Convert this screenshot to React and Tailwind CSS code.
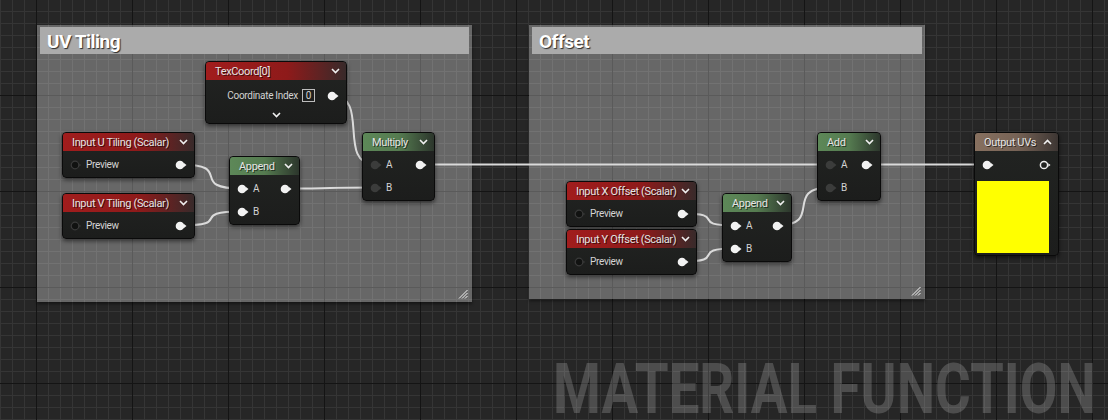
import React from 'react';

const W = 1108;
const H = 420;

const HEADERS = {
  red: 'bg-[linear-gradient(90deg,#a11d1d_0%,#8e1a1a_58%,#382a2a_100%)]',
  green: 'bg-[linear-gradient(90deg,#5d8858_0%,#557b50_50%,#2c362c_100%)]',
  brown: 'bg-[linear-gradient(90deg,#87705f_0%,#776356_50%,#3d3633_100%)]',
};

const PT = { 2: 'pt-[2px]', 4: 'pt-[4px]' };

const NODES = [
  { id: 'tex', x: 205, y: 61, w: 142, pt: 4, kind: 'red', title: 'TexCoord[0]', tex: true },
  { id: 'inU', x: 62, y: 132, w: 133, pt: 2, kind: 'red', title: 'Input U Tiling (Scalar)', rows: [{ l: 'hollow', label: 'Preview', r: 'filled' }] },
  { id: 'inV', x: 62, y: 193, w: 133, pt: 2, kind: 'red', title: 'Input V Tiling (Scalar)', rows: [{ l: 'hollow', label: 'Preview', r: 'filled' }] },
  { id: 'appUV', x: 229, y: 156, w: 71, pt: 2, kind: 'green', title: 'Append', rows: [{ l: 'filled', label: 'A', r: 'filled' }, { l: 'filled', label: 'B' }] },
  { id: 'mul', x: 362, y: 132, w: 73, pt: 2, kind: 'green', title: 'Multiply', rows: [{ l: 'dark', label: 'A', r: 'filled' }, { l: 'dark', label: 'B' }] },
  { id: 'inX', x: 566, y: 181, w: 131, pt: 2, kind: 'red', title: 'Input X Offset (Scalar)', rows: [{ l: 'hollow', label: 'Preview', r: 'filled' }] },
  { id: 'inY', x: 566, y: 229, w: 131, pt: 2, kind: 'red', title: 'Input Y Offset (Scalar)', rows: [{ l: 'hollow', label: 'Preview', r: 'filled' }] },
  { id: 'appOff', x: 722, y: 193, w: 70, pt: 2, kind: 'green', title: 'Append', rows: [{ l: 'filled', label: 'A', r: 'filled' }, { l: 'filled', label: 'B' }] },
  { id: 'add', x: 817, y: 132, w: 64, pt: 2, kind: 'green', title: 'Add', rows: [{ l: 'dark', label: 'A', r: 'filled' }, { l: 'dark', label: 'B' }] },
  { id: 'out', x: 974, y: 132, w: 85, pt: 2, kind: 'brown', title: 'Output UVs', up: true, output: true },
];

const byId = Object.fromEntries(NODES.map((n) => [n.id, n]));
const rowY = (n, i) => n.y + 19 + n.pt + 11.5 + 23 * i;
const inX = (n) => n.x + 13;
const outX = (n) => n.x + n.w - 15;

const LINKS = [
  ['tex', 0, 'mul', 0],
  ['inU', 0, 'appUV', 0],
  ['inV', 0, 'appUV', 1],
  ['appUV', 0, 'mul', 1],
  ['mul', 0, 'add', 0],
  ['inX', 0, 'appOff', 0],
  ['inY', 0, 'appOff', 1],
  ['appOff', 0, 'add', 1],
  ['add', 0, 'out', 0],
];

function wirePath([a, ai, b, bi]) {
  const na = byId[a];
  const nb = byId[b];
  const x1 = outX(na);
  const y1 = rowY(na, ai);
  const x2 = inX(nb);
  const y2 = rowY(nb, bi);
  const k = Math.min(60, Math.max(20, (x2 - x1) * 0.9));
  return `M${x1} ${y1} C${x1 + k} ${y1}, ${x2 - k} ${y2}, ${x2} ${y2}`;
}

function Pin({ type }) {
  if (type === 'filled')
    return (
      <svg width="12" height="10" viewBox="0 0 12 10" className="shrink-0">
        <circle cx="5" cy="5" r="4.3" fill="#f2f2f2" />
        <path d="M9 3 L11.5 5 L9 7 Z" fill="#f2f2f2" />
      </svg>
    );
  if (type === 'dark')
    return (
      <svg width="12" height="10" viewBox="0 0 12 10" className="shrink-0">
        <circle cx="5" cy="5" r="4.3" fill="#3b3c3b" />
        <path d="M9 3 L11.5 5 L9 7 Z" fill="#3b3c3b" />
      </svg>
    );
  if (type === 'ring')
    return (
      <svg width="12" height="10" viewBox="0 0 12 10" className="shrink-0">
        <circle cx="5" cy="5" r="3.6" fill="none" stroke="#eeeeee" strokeWidth="1.5" />
        <path d="M9.3 3.3 L11.5 5 L9.3 6.7 Z" fill="#eeeeee" />
      </svg>
    );
  return (
    <svg width="12" height="10" viewBox="0 0 12 10" className="shrink-0">
      <circle cx="5" cy="5" r="3.8" fill="#111211" stroke="#3a3a3a" strokeWidth="1.2" />
      <path d="M9.3 3.6 L11 5 L9.3 6.4 Z" fill="#3a3a3a" />
    </svg>
  );
}

function Chevron({ up }) {
  return (
    <svg width="9" height="6" viewBox="0 0 9 6" className="shrink-0">
      <path d={up ? 'M1 5 L4.5 1.5 L8 5' : 'M1 1 L4.5 4.5 L8 1'} fill="none" stroke="#f0f0f0" strokeWidth="1.6" />
    </svg>
  );
}

function Node({ n }) {
  return (
    <div
      className="absolute overflow-hidden rounded-[4px] border border-[#0a0a0a] bg-[linear-gradient(180deg,#222422_0%,#1c1d1c_100%)] shadow-[0_2px_4px_rgba(0,0,0,0.55)]"
      style={{ left: n.x, top: n.y, width: n.w }}
    >
      <div className={`flex h-[18px] items-center justify-between pl-[9px] pr-[6px] ${HEADERS[n.kind]}`}>
        <span className="text-[11px] leading-none tracking-[-0.35px] whitespace-nowrap text-[#e4e4e4] [text-shadow:1px_1px_0_rgba(0,0,0,0.6)]">
          {n.title}
        </span>
        <Chevron up={n.up} />
      </div>
      <div className={`${PT[n.pt]} pb-px`}>
        {n.tex && (
          <>
            <div className="flex h-[23px] items-center justify-end pr-[7px]">
              <span className="text-[10px] tracking-[-0.3px] text-[#d2d2d2]">Coordinate Index</span>
              <span className="ml-[4px] flex h-[13px] w-[13px] items-center justify-center border border-[#bdbdbd] text-[10px] leading-none text-[#d2d2d2]">
                0
              </span>
              <span className="ml-[12px] flex">
                <Pin type="filled" />
              </span>
            </div>
            <div className="flex h-[15px] items-center justify-center">
              <Chevron />
            </div>
          </>
        )}
        {n.rows &&
          n.rows.map((r, i) => (
            <div key={i} className="flex h-[23px] items-center pl-[7px] pr-[7px]">
              <Pin type={r.l} />
              <span className="ml-[4px] text-[10px] tracking-[-0.3px] text-[#d4d4d4]">{r.label}</span>
              <span className="flex-1" />
              {r.r && <Pin type={r.r} />}
            </div>
          ))}
        {n.output && (
          <>
            <div className="flex h-[23px] items-center justify-between pl-[7px] pr-[7px]">
              <Pin type="filled" />
              <Pin type="ring" />
            </div>
            <div className="mt-[5px] mb-px ml-[2px] h-[72px] w-[72px] bg-[#ffff00]" />
          </>
        )}
      </div>
    </div>
  );
}

function ResizeGrip() {
  return (
    <svg width="10" height="10" viewBox="0 0 10 10" className="absolute right-[4px] bottom-[3px]">
      <path d="M9.5 1 L1 9.5 M9.5 4 L4 9.5 M9.5 7 L7 9.5" stroke="#f4f4f4" strokeWidth="1" />
    </svg>
  );
}

function Comment({ title, className }) {
  return (
    <div className={`absolute bg-white/[0.3] shadow-[0_2px_3px_rgba(0,0,0,0.45)] ${className}`}>
      <div className="mx-[3px] mt-[2px] flex h-[27px] items-center bg-[#ababab] px-[7px] pt-[2px]">
        <span className="text-[19px] leading-none font-bold tracking-[-0.5px] text-white [text-shadow:1px_1px_1px_rgba(0,0,0,0.75)]">
          {title}
        </span>
      </div>
      <ResizeGrip />
    </div>
  );
}

function Grid() {
  const minor = [];
  const major = [];
  for (let x = 0; x < W; x += 12) {
    const el = <rect key={`v${x}`} x={x} y="0" width="1" height={H} />;
    ((x - 36) % 96 === 0 ? major : minor).push(el);
  }
  for (let y = 11; y < H; y += 12) {
    const el = <rect key={`h${y}`} x="0" y={y} width={W} height="1" />;
    ((y - 95) % 96 === 0 ? major : minor).push(el);
  }
  return (
    <svg width={W} height={H} className="absolute inset-0">
      <g fill="#353535">{minor}</g>
      <g fill="#141414">{major}</g>
    </svg>
  );
}

export default function App() {
  return (
    <div className="relative h-[420px] w-[1108px] overflow-hidden bg-[#262626] [font-family:Roboto,sans-serif]">
      <Grid />

      <Comment title="UV Tiling" className="left-[37px] top-[25px] h-[277px] w-[435px]" />
      <Comment title="Offset" className="left-[529px] top-[25px] h-[274px] w-[396px]" />

      <svg width={W} height={H} className="absolute inset-0">
        {LINKS.map((l, i) => (
          <path key={i} d={wirePath(l)} fill="none" stroke="#dadada" strokeWidth="2" />
        ))}
      </svg>

      {NODES.map((n) => (
        <Node key={n.id} n={n} />
      ))}

      <div className="absolute right-[12px] top-[359px] origin-right scale-x-[0.78] text-[70px] leading-[60px] font-bold whitespace-nowrap text-white/[0.18]">
        MATERIAL FUNCTION
      </div>
    </div>
  );
}
